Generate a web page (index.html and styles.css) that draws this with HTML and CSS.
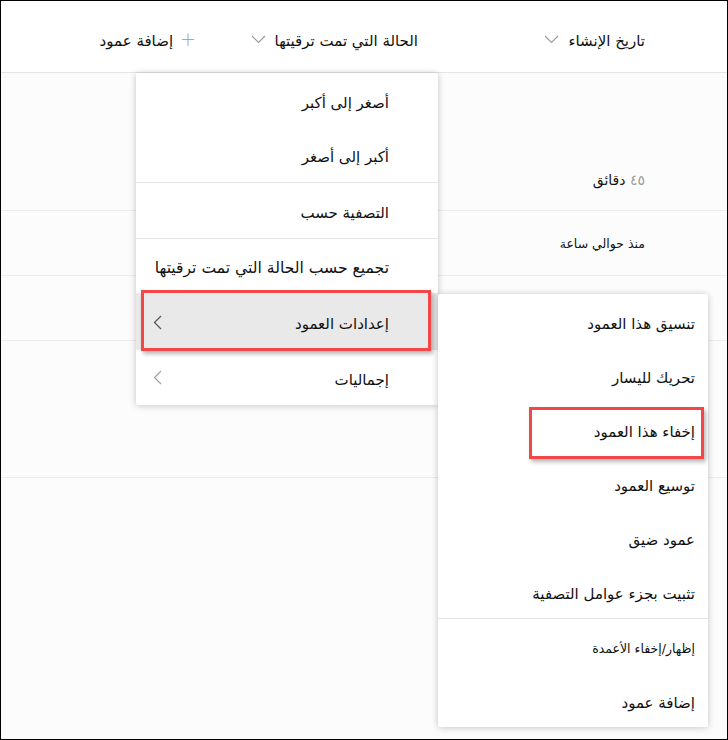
FILE: index.html
```html
<!DOCTYPE html>
<html lang="ar" dir="rtl">
<head>
<meta charset="utf-8">
<link rel="stylesheet" href="styles.css">
</head>
<body>
<div class="frame">
  <div class="header">
    <div class="hcell c1"><span class="htext">تاريخ الإنشاء</span><svg class="chev" width="15" height="9" viewBox="0 0 15 9"><polyline points="1,1 7.5,7.5 14,1" fill="none" stroke="#9a9a9a" stroke-width="1.1"/></svg></div>
    <div class="hcell c2"><span class="htext">الحالة التي تمت ترقيتها</span><svg class="chev" width="15" height="9" viewBox="0 0 15 9"><polyline points="1,1 7.5,7.5 14,1" fill="none" stroke="#9a9a9a" stroke-width="1.1"/></svg></div>
    <div class="hcell c3"><span class="plus">+</span><span class="htext">إضافة عمود</span></div>
  </div>
  <div class="rows">
    <div class="row tall"><span class="cell"><span class="num">٤٥</span> دقائق</span></div>
    <div class="row"><span class="cell small">منذ حوالي ساعة</span></div>
    <div class="row"></div>
    <div class="row tall2"></div>
  </div>

  <div class="menu main-menu">
    <div class="item">أصغر إلى أكبر</div>
    <div class="item">أكبر إلى أصغر</div>
    <div class="divider"></div>
    <div class="item">التصفية حسب</div>
    <div class="divider"></div>
    <div class="item wide">تجميع حسب الحالة التي تمت ترقيتها</div>
    <div class="item active"><span>إعدادات العمود</span><svg class="sub" width="9" height="15" viewBox="0 0 9 15"><polyline points="8,1 1.5,7.5 8,14" fill="none" stroke="#555" stroke-width="1.2"/></svg></div>
    <div class="item"><span>إجماليات</span><svg class="sub" width="9" height="15" viewBox="0 0 9 15"><polyline points="8,1 1.5,7.5 8,14" fill="none" stroke="#a0a0a0" stroke-width="1.2"/></svg></div>
  </div>

  <div class="menu sub-menu">
    <div class="item">تنسيق هذا العمود</div>
    <div class="item">تحريك لليسار</div>
    <div class="item">إخفاء هذا العمود</div>
    <div class="item">توسيع العمود</div>
    <div class="item">عمود ضيق</div>
    <div class="item">تثبيت بجزء عوامل التصفية</div>
    <div class="divider"></div>
    <div class="item small">إظهار/إخفاء الأعمدة</div>
    <div class="item">إضافة عمود</div>
  </div>

  <div class="callout callout-1"></div>
  <div class="callout callout-2"></div>
</div>
</body>
</html>
```
FILE: styles.css
```css
* { box-sizing: border-box; }
html, body { margin: 0; padding: 0; background: #fff; }
body { font-family: "DejaVu Sans", "Noto Sans", sans-serif; color: #111; }

.frame {
  position: relative;
  width: 728px;
  height: 740px;
  border: 1px solid #000;
  background: #fcfcfc;
  overflow: hidden;
}

.header {
  display: flex;
  height: 72px;
  background: #fff;
  border-bottom: 1px solid #e4e4e4;
}
.hcell {
  display: flex;
  align-items: center;
  gap: 9px;
  font-size: 15px;
  padding-top: 8px;
}
.hcell .chev { margin-top: -3px; }
.c1 { width: 295px; padding-right: 82px; }
.c2 { width: 224px; padding-right: 14px; }
.c3 { flex: 1; padding-right: 12px; gap: 7px; }
.plus { color: #a8a8a8; font-size: 19px; font-weight: 300; margin-top: -3px; }
.chev { flex: none; }

.rows { display: flex; flex-direction: column; }
.row {
  height: 65px;
  border-bottom: 1px solid #ececec;
  display: flex;
  align-items: center;
  padding-right: 82px;
}
.row.tall { height: 138px; align-items: flex-end; padding-bottom: 22px; }
.row.tall2 { height: 137px; }
.cell { font-size: 14px; }
.cell.small { font-size: 12.5px; }
.num { color: #9a9a9a; }

.menu {
  position: absolute;
  background: #fff;
  box-shadow: 0 0 6px rgba(0,0,0,0.16), 0 2px 8px rgba(0,0,0,0.08);
  border-radius: 2px;
}
.main-menu { left: 135px; top: 72px; width: 302px; }
.sub-menu { left: 437px; top: 293px; width: 270px; padding: 0; }

.item {
  height: 54.5px;
  display: flex;
  align-items: center;
  font-size: 15px;
  white-space: nowrap;
  padding-top: 5px;
}
.item.wide { font-size: 15.6px; }
.main-menu .item { padding-right: 49px; padding-left: 17px; }
.main-menu .item.active { background: #e9e9e9; height: 57px; }
.main-menu .item .sub { margin-right: auto; margin-top: -4px; }
.sub-menu .item { height: 54px; padding-right: 13px; }
.sub-menu .item.small { font-size: 12.5px; }
.divider { height: 1px; background: #e6e6e6; }

.callout {
  position: absolute;
  border: 3px solid #f24648;
  box-shadow: 2px 3px 4px rgba(0,0,0,0.28);
}
.callout-1 { left: 140px; top: 289px; width: 290px; height: 61px; }
.callout-2 { left: 528px; top: 406px; width: 175px; height: 52px; }
```
